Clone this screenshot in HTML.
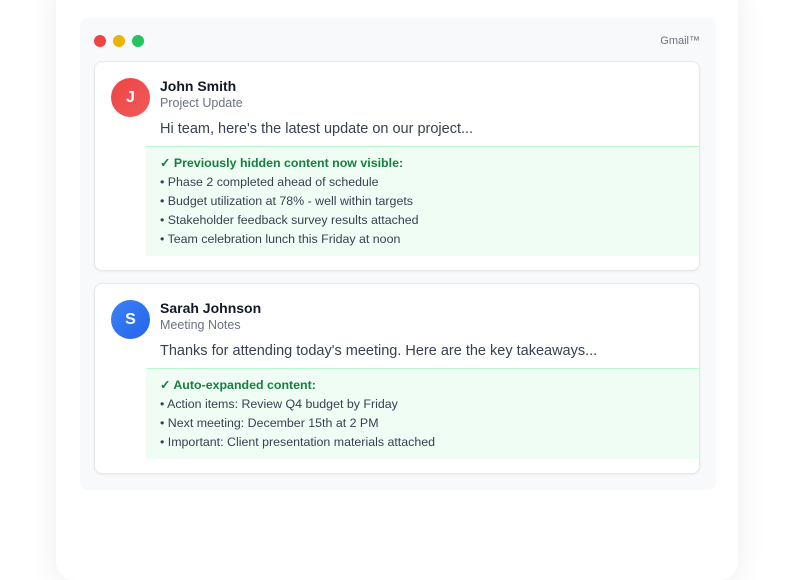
<!DOCTYPE html>
<html><head><style>
*{margin:0;padding:0;box-sizing:border-box}
body{width:800px;height:500px;background:#fff;font-family:"Liberation Sans",Arial,sans-serif;overflow:hidden;position:relative}
.outer{position:absolute;left:56px;top:-20px;width:682px;height:600px;background:#fff;border-radius:18px;box-shadow:0 4px 30px rgba(0,0,0,0.08)}
.panel{position:absolute;left:80px;top:18px;width:636px;height:472px;background:#f8f9fa;border-radius:8px}
.dot{position:absolute;top:35px;width:12px;height:12px;border-radius:50%}
.gm{position:absolute;right:100px;top:35px;font-size:11px;color:#6b7280}
.card{position:absolute;left:94px;width:606px;background:#fff;border:1px solid #e5e7eb;border-radius:8px;box-shadow:0 1px 2px rgba(0,0,0,0.05)}
.av{position:absolute;left:16px;top:16px;width:39px;height:39px;border-radius:50%;color:#fff;font-weight:bold;font-size:16px;text-align:center;line-height:39px}
.name{position:absolute;left:65px;top:16px;font-size:14px;font-weight:bold;color:#111827}
.sub{position:absolute;left:65px;top:34px;font-size:12.5px;color:#6b7280}
.body{position:absolute;left:65px;top:59px;font-size:14.5px;color:#374151}
.green{position:absolute;left:51px;right:0;background:#f0fdf4;border-top:1px solid #bbf7d0;padding:7px 14px;font-size:12.4px;color:#374151}
.green div{height:19px;line-height:19px}
.green .h{color:#15803d;font-weight:bold}
</style></head><body>
<div class="outer"></div>
<div class="panel"></div>
<div class="dot" style="left:94px;background:#ef4444"></div>
<div class="dot" style="left:113px;background:#eab308"></div>
<div class="dot" style="left:132px;background:#22c55e"></div>
<div class="gm">Gmail™</div>
<div class="card" style="top:61px;height:210px">
<div class="av" style="background:linear-gradient(135deg,#ef4444,#f05a5a)">J</div>
<div class="name">John Smith</div>
<div class="sub">Project Update</div>
<div class="body">Hi team, here's the latest update on our project...</div>
<div class="green" style="top:84px;height:110px">
<div class="h">✓ Previously hidden content now visible:</div>
<div>• Phase 2 completed ahead of schedule</div>
<div>• Budget utilization at 78% - well within targets</div>
<div>• Stakeholder feedback survey results attached</div>
<div>• Team celebration lunch this Friday at noon</div>
</div></div>
<div class="card" style="top:283px;height:191px">
<div class="av" style="background:linear-gradient(135deg,#3b82f6,#2563eb)">S</div>
<div class="name">Sarah Johnson</div>
<div class="sub">Meeting Notes</div>
<div class="body">Thanks for attending today's meeting. Here are the key takeaways...</div>
<div class="green" style="top:84px;height:91px">
<div class="h">✓ Auto-expanded content:</div>
<div>• Action items: Review Q4 budget by Friday</div>
<div>• Next meeting: December 15th at 2 PM</div>
<div>• Important: Client presentation materials attached</div>
</div></div>
</body></html>
